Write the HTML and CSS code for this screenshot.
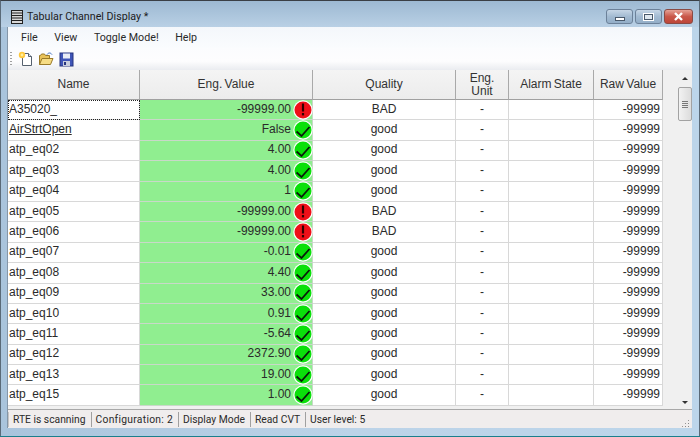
FILE: index.html
```html
<!DOCTYPE html>
<html>
<head>
  <title>Tabular Channel Display</title>
  <link rel="stylesheet" href="styles.css">
</head>
<body>
  <div class="window">
    <div class="titlebar">
      <svg class="appicon" width="12" height="14" viewBox="0 0 12 14">
        <rect x="0.5" y="0.5" width="11" height="13" fill="#d8d8d8" stroke="#222"/>
        <path d="M1 3h10M1 5.500h10M1 8h10M1 10.500h10" stroke="#222" stroke-width="1.200"/>
      </svg>
      <span class="title">Tabular Channel Display *</span>
      <div class="winbtns">
        <div class="winbtn"><span class="glyph-min"></span></div>
        <div class="winbtn"><span class="glyph-max"></span></div>
        <div class="winbtn close">
          <svg width="11" height="9" viewBox="0 0 11 9"><path d="M2 1l7 7M9 1l-7 7" stroke="#fff" stroke-width="2.400"/></svg>
        </div>
      </div>
    </div>
    <div class="client">
      <div class="menubar">
        <span>File</span><span>View</span><span>Toggle Mode!</span><span>Help</span>
      </div>
      <div class="toolbar">
        <div class="grip"></div>
        <svg width="16" height="16" viewBox="0 0 16 16">
          <path d="M4.500 2.500h6l3 3v9h-9z" fill="#fff" stroke="#54606e"/>
          <path d="M10.500 2.500v3h3" fill="#dfe8f0" stroke="#54606e"/>
          <circle cx="4" cy="4" r="3.200" fill="#ffc83c"/>
          <circle cx="4" cy="4" r="1.400" fill="#ffef9e"/>
        </svg>
        <svg width="16" height="16" viewBox="0 0 16 16">
          <path d="M1.500 13.500v-9h1l1-1.500h3l1 1.500h4v9z" fill="#e8c25a" stroke="#9a7a28"/>
          <path d="M1.500 13.500l2.500-6h11l-2.500 6z" fill="#f6dc84" stroke="#9a7a28"/>
          <path d="M9 3.500c1.500-2 3.500-2 5 0" fill="none" stroke="#3a6ec0"/>
        </svg>
        <svg class="saveicon" width="15" height="15" viewBox="0 0 15 15">
          <rect x="1" y="1" width="13" height="13" fill="#3f55b8" stroke="#26347e"/>
          <rect x="4" y="1.500" width="7" height="5" fill="#e8ecf6"/>
          <rect x="4" y="9" width="7" height="5" fill="#c8cede"/>
          <rect x="5" y="10" width="2" height="3" fill="#26347e"/>
        </svg>
      </div>
      <div class="gridarea">
        <div class="grid" id="grid">
          <div class="head">Name</div>
          <div class="head">Eng. Value</div>
          <div class="head">Quality</div>
          <div class="head">Eng.<br>Unit</div>
          <div class="head">Alarm State</div>
          <div class="head">Raw Value</div>
        </div>
        <div class="scrollbar">
          <div class="arrow up"></div>
          <div class="thumb"><span></span></div>
          <div class="track"></div>
          <div class="arrow down"></div>
        </div>
      </div>
      <div class="statusbar">
        <span>RTE is scanning</span><span class="wide">Configuration: 2</span><span>Display Mode</span><span>Read CVT</span><span>User level: 5</span>
        <div class="resize"></div>
      </div>
    </div>
  </div>

  <script>
    const rows = [
      ['A35020_', '-99999.00', 'BAD'],
      ['AirStrtOpen', 'False', 'good'],
      ['atp_eq02', '4.00', 'good'],
      ['atp_eq03', '4.00', 'good'],
      ['atp_eq04', '1', 'good'],
      ['atp_eq05', '-99999.00', 'BAD'],
      ['atp_eq06', '-99999.00', 'BAD'],
      ['atp_eq07', '-0.01', 'good'],
      ['atp_eq08', '4.40', 'good'],
      ['atp_eq09', '33.00', 'good'],
      ['atp_eq10', '0.91', 'good'],
      ['atp_eq11', '-5.64', 'good'],
      ['atp_eq12', '2372.90', 'good'],
      ['atp_eq13', '19.00', 'good'],
      ['atp_eq15', '1.00', 'good']
    ];

    const okIcon = `<svg class="state" width="20" height="20" viewBox="0 0 20 20">
      <circle cx="10" cy="10" r="9.700" fill="#fff"/><circle cx="10" cy="10" r="8.500" fill="#0ae00a"/>
      <path d="M3.500 11.500l5 4.500 8-9" fill="none" stroke="#0a1a0a" stroke-width="1.800"/></svg>`;
    const badIcon = `<svg class="state" width="20" height="20" viewBox="0 0 20 20">
      <circle cx="10" cy="10" r="9.700" fill="#fff"/><circle cx="10" cy="10" r="8.500" fill="#ee0f18"/>
      <path d="M10 3.500v8" stroke="#300" stroke-width="2.200"/><rect x="8.900" y="13" width="2.200" height="2.400" fill="#300"/></svg>`;

    const grid = document.getElementById('grid');
    rows.forEach((row, index) => {
      const nameClass = index === 0 ? 'cell name focus' : index === 1 ? 'cell name link' : 'cell name';
      grid.innerHTML += `
        <div class="${nameClass}"><span>${row[0]}</span></div>
        <div class="cell value"><span class="num">${row[1]}</span>${row[2] === 'BAD' ? badIcon : okIcon}</div>
        <div class="cell center">${row[2]}</div>
        <div class="cell center">-</div>
        <div class="cell"></div>
        <div class="cell raw">-99999</div>`;
    });
  </script>
</body>
</html>
```

FILE: styles.css
```css
html, body { margin: 0; padding: 0; }
body { width: 700px; height: 437px; overflow: hidden; background: #1a7f8c; font-family: "Liberation Sans", Arial, sans-serif; font-size: 12px; color: #2a2a2a; }

.window { height: 436px; box-sizing: border-box; border-top: 1px solid #3a3f45; border-left: 1px solid #5a6a78; border-right: 1px solid #5a6a78; background: linear-gradient(90deg, #a9c4dc, #bcd3e8 50%, #bcd5ea); padding: 0 6px 8px 6px; display: flex; flex-direction: column; }

.titlebar { height: 26px; flex: none; box-sizing: border-box; display: flex; align-items: center; margin: 0 -6px; padding: 5px 6px 0 10px; background: linear-gradient(#9db9d2, #b9d0e5); }
.appicon { margin-right: 4px; }
.title { font-family: Roboto, sans-serif; font-size: 10.700px; color: #1c1c1c; }
.winbtns { margin-left: auto; display: flex; gap: 2px; align-self: flex-start; margin-top: 3px; }
.winbtn { width: 25px; height: 13px; border: 1px solid #6c8199; border-radius: 3px; background: linear-gradient(#c6d6e6, #a3bbd2 50%, #93aec8); display: flex; align-items: center; justify-content: center; }
.winbtn.close { width: 27px; border-color: #8a4a44; background: linear-gradient(#e6a296, #c9584a 50%, #bd4639); }
.glyph-min { width: 8px; height: 2px; margin-top: 4px; background: #fff; border: 1px solid #4a5a6c; }
.glyph-max { width: 7px; height: 4px; border: 1px solid #4a5a6c; outline: 1px solid #fff; background: #dfe8f0; }

.client { flex: 1; min-height: 0; display: flex; flex-direction: column; background: #fff; border-left: 1px solid #8496a8; margin-right: 1px; }

.menubar { height: 21px; flex: none; display: flex; align-items: center; padding-left: 13px; gap: 16.500px; font-family: Roboto, sans-serif; font-size: 10.700px; background: linear-gradient(#f4f7fb, #fafcfe); }

.toolbar { height: 22px; flex: none; display: flex; align-items: center; gap: 4px; padding-left: 2px; background: linear-gradient(#fbfcfe, #fdfdfe 60%, #eaecf0); }
.grip { width: 2px; height: 14px; margin-right: 2px; background: repeating-linear-gradient(#a0a0a0 0 1px, transparent 1px 3px); }
.saveicon { margin-left: 1px; }

.gridarea { flex: 1; min-height: 0; display: flex; background: #f0f0f0; }
.grid { width: 655px; flex: none; display: grid; grid-template-columns: 132px 173px 143px 53px 85px 69px; grid-template-rows: 30px repeat(15, 20.400px); overflow: hidden; align-content: start; }
.head { display: flex; align-items: center; justify-content: center; text-align: center; background: linear-gradient(#f4f4f4, #ececec); border-right: 1px solid #a9a9a9; border-bottom: 1px solid #a0a0a0; box-sizing: border-box; line-height: 13px; word-spacing: -1px; color: #333; }

.cell { box-sizing: border-box; height: 20.400px; background: #fff; border-right: 1px solid #d8d8d8; border-bottom: 1px solid #d8d8d8; padding: 0 2px 2px; display: flex; align-items: center; }
.name { padding-left: 1px; }
.focus { outline: 1px dotted #222; outline-offset: -1px; }
.link span { text-decoration: underline; }
.center { justify-content: center; }
.raw { justify-content: flex-end; }
.value { background: #90ee90; justify-content: flex-end; padding: 0 0 2px; border-color: #c8d8c8; }
.num { margin-right: 2px; }
.state { flex: none; margin: 0 -1px -2px 0; }

.scrollbar { width: 14px; margin-left: auto; display: flex; flex-direction: column; background: #f0f0f0; }
.arrow { height: 16px; flex: none; position: relative; }
.arrow::after { content: ""; position: absolute; left: 4px; border-left: 3px solid transparent; border-right: 3px solid transparent; }
.arrow.up::after { top: 7px; border-bottom: 3px solid #333; }
.arrow.down::after { top: 8px; border-top: 3px solid #333; }
.thumb { height: 34px; flex: none; margin: 1px 0 0 0; box-sizing: border-box; border: 1px solid #a2a2a2; border-radius: 2px; background: linear-gradient(90deg, #f2f2f2, #dcdcdc); display: flex; align-items: center; justify-content: center; }
.thumb span { width: 6px; height: 7px; background: repeating-linear-gradient(#777 0 1px, transparent 1px 2px); }
.track { flex: 1; }

.statusbar { height: 19px; flex: none; display: flex; align-items: center; padding-top: 1px; background: #f0eded; border-top: 1px solid #a8a8a8; box-sizing: border-box; font-family: Roboto, sans-serif; font-size: 10.300px; }
.statusbar span { padding: 0 5px 0 4px; height: 15px; line-height: 15px; border-right: 1px solid #a0a0a0; }
.statusbar span:first-child { border-left: 1px solid #c4c4c4; }
.statusbar span:nth-child(5) { border-right: none; }
.statusbar .wide { letter-spacing: 0.280px; }
.resize { margin-left: auto; margin-right: 2px; margin-top: 7px; width: 9px; height: 9px; background: radial-gradient(circle, #888 1px, transparent 1px) 0 0 / 3px 3px; clip-path: polygon(100% 0, 100% 100%, 0 100%); }
```
